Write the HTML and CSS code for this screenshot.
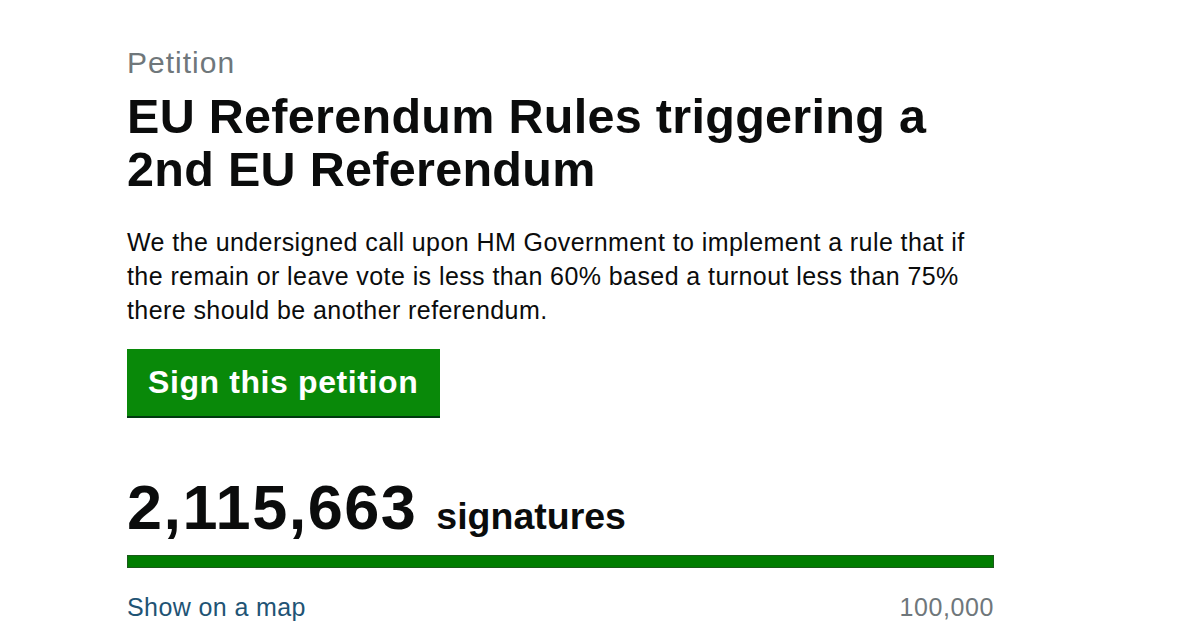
FILE: index.html
```html
<!DOCTYPE html>
<html>
<head>
<meta charset="utf-8">
<link rel="stylesheet" href="styles.css">
</head>
<body>
<main class="page">
  <p class="kicker">Petition</p>
  <h1 class="title">EU Referendum Rules triggering a<br>2nd EU Referendum</h1>
  <p class="summary">We the undersigned call upon HM Government to implement a rule that if the remain or leave vote is less than 60% based a turnout less than 75% there should be another referendum.</p>
  <div class="actions"><a class="button" href="#">Sign this petition</a></div>
  <div class="count"><span class="count-num">2,115,663</span><span class="count-label">signatures</span></div>
  <div class="bar"><div class="bar-fill"></div></div>
  <div class="bar-foot"><a class="map-link" href="#">Show on a map</a><span class="target">100,000</span></div>
</main>
</body>
</html>
```

FILE: styles.css
```css
html, body {
  margin: 0;
  padding: 0;
  background: #fff;
}
body {
  font-family: "Liberation Sans", Arial, sans-serif;
  color: #0b0c0c;
}
.page {
  width: 867px;
  padding: 46px 0 0 127px;
}
.kicker {
  margin: 0;
  font-size: 30px;
  line-height: 34px;
  letter-spacing: 1px;
  color: #6f777b;
}
.title {
  margin: 10px 0 0 0;
  font-size: 48.5px;
  line-height: 53px;
  letter-spacing: 0.3px;
  font-weight: bold;
}
.summary {
  margin: 29px 0 0 0;
  width: 860px;
  font-size: 25px;
  line-height: 34px;
  letter-spacing: 0.42px;
}
.actions {
  margin-top: 22px;
  display: flex;
}
.button {
  display: block;
  background: #098909;
  color: #fff;
  font-weight: bold;
  font-size: 32px;
  line-height: 67px;
  padding: 0 22px 0 21px;
  letter-spacing: 0.6px;
  text-decoration: none;
  box-shadow: 0 2px 0 #003a10;
}
.count {
  margin-top: 60px;
  display: flex;
  align-items: baseline;
  gap: 19px;
}
.count-num {
  font-size: 63px;
  line-height: 63px;
  letter-spacing: 1.5px;
  font-weight: bold;
}
.count-label {
  font-size: 37.5px;
  font-weight: bold;
}
.bar {
  margin-top: 16px;
  height: 11px;
  background: #007d00;
  border: 1px solid #1a5a1a;
}
.bar-fill {
  height: 100%;
}
.bar-foot {
  margin-top: 25px;
  display: flex;
  justify-content: space-between;
  align-items: baseline;
  font-size: 25px;
  line-height: 28px;
}
.map-link {
  color: #1f5475;
  text-decoration: none;
  letter-spacing: 0.4px;
}
.target {
  color: #6f777b;
  letter-spacing: 0.6px;
}
```
